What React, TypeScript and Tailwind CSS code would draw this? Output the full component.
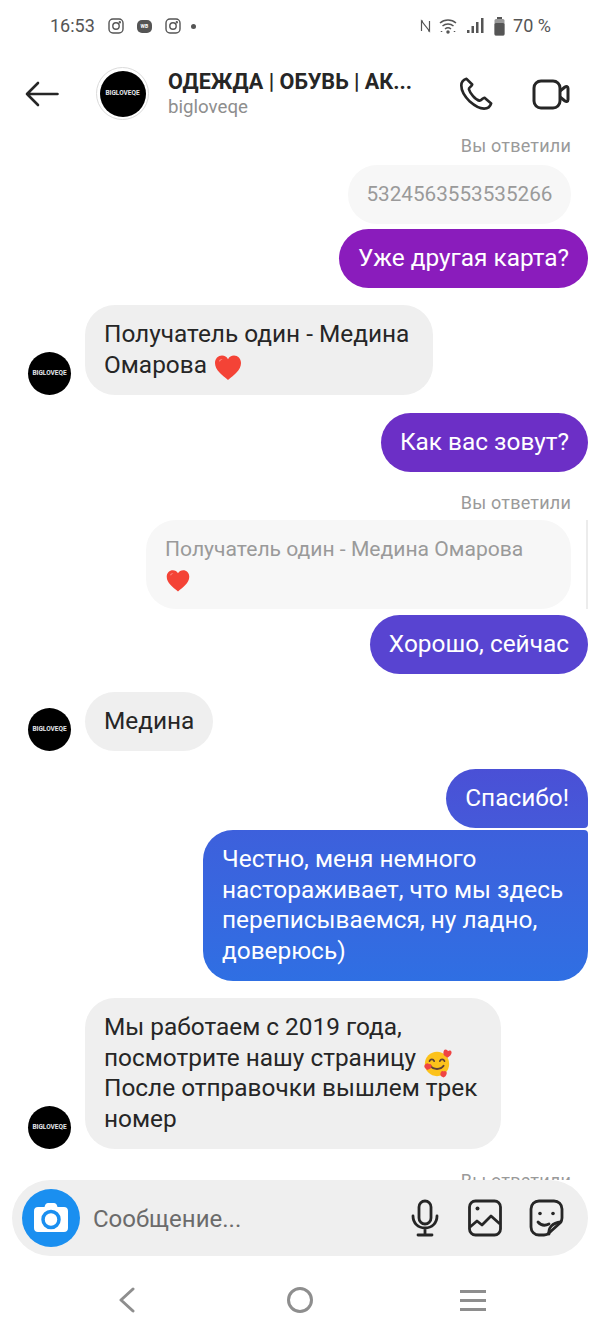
import React from "react";

const Avatar = () => (
  <div className="w-[43px] h-[43px] rounded-full bg-black flex items-center justify-center shrink-0">
    <span className="text-[6.500px] leading-none font-bold text-gray-200 font-['Roboto',sans-serif]">BIGLOVEQE</span>
  </div>
);

const Heart = ({ size = 30 }: { size?: number }) => (
  <svg width={size} height={size} viewBox="0 0 30 30" className="inline-block align-[-6px] -my-[4px]">
    <path
      d="M15 27C9 22 2 17 2 10c0-4.500 3.200-7.500 7-7.500 2.600 0 4.800 1.300 6 3.700 1.200-2.400 3.400-3.700 6-3.700 3.800 0 7 3 7 7.500 0 7-7 12-13 17z"
      fill="#f44336"
    />
    <path d="M6 7.500c1-1.300 2.500-1.800 3.800-1.500-1.500.6-2.500 1.600-3 3z" fill="#ff8a80" />
  </svg>
);

const Smiling = () => (
  <svg width="30" height="30" viewBox="0 0 32 32" className="inline-block align-[-6px] -my-[6px]">
    <circle cx="16" cy="17" r="13" fill="#fcc21b" />
    <path d="M8 14c1-2.500 4-2.500 5 0M19 14c1-2.500 4-2.500 5 0" stroke="#5d4037" strokeWidth="1.800" fill="none" strokeLinecap="round" />
    <path d="M9 19c3 4.500 11 4.500 14 0" stroke="#5d4037" strokeWidth="2" fill="none" strokeLinecap="round" />
    <path d="M25 1.500c1.500 0 2.500 1 2.700 2 .6-1 2-1.300 3-.5 1.500 1.300.8 3.500-.5 5l-3 2.500-3.500-2.500C22 6 23 1.500 25 1.500z" fill="#ef4444" />
    <path d="M4 17c1.300-1 2.700-.7 3.500.3.800-.5 2-.3 2.500.7.800 1.800-.5 3.500-2 4.500l-2.500 1-2.500-2.500C2 19.500 2.500 18 4 17z" fill="#ef4444" />
    <path d="M20 26c.7-1.300 2-1.700 3-1 .8-.8 2-.8 2.800 0 1.200 1.300.5 3.500-.8 5l-2 1.500-2.500-1.500c-1-1-1.200-2.800-.5-4z" fill="#ef4444" />
  </svg>
);

const InstaIcon = () => (
  <svg width="16" height="16" viewBox="0 0 16 16" fill="none" stroke="#555" strokeWidth="1.400">
    <rect x="1" y="1" width="14" height="14" rx="4" />
    <circle cx="8" cy="8" r="3.200" />
    <circle cx="11.800" cy="4.200" r=".5" fill="#555" />
  </svg>
);

const Label = ({ className = "" }: { className?: string }) => (
  <div className={`pr-[29px] text-right text-[18px] leading-[22px] tracking-[0.2px] text-[#9a9a9a] ${className}`}>Вы ответили</div>
);

const Mine = ({ className, children }: { className: string; children: React.ReactNode }) => (
  <div className="flex justify-end pr-3">
    <div className={`px-[19px] py-[14.250px] text-white ${className}`}>{children}</div>
  </div>
);

const Theirs = ({ className = "", children }: { className?: string; children: React.ReactNode }) => (
  <div className={`flex items-end gap-[14px] pl-7 ${className}`}>
    <Avatar />
    <div className="rounded-[30px] bg-[#efefef] px-[19px] py-[14.250px] text-[#262626]">{children}</div>
  </div>
);

export default function App() {
  return (
    <div className="flex h-[1332px] w-[600px] flex-col overflow-hidden bg-white font-['Roboto',sans-serif] text-[24.400px] leading-[30.500px]">
      {/* status bar */}
      <div className="flex h-[52px] shrink-0 items-center justify-between pl-[50px] pr-[49px] text-[18px] text-[#555]">
        <div className="flex items-center gap-[13px]">
          <span>16:53</span>
          <InstaIcon />
          <span className="flex h-[13px] w-[15px] items-center justify-center rounded-[5px] bg-[#555] text-[5px] font-bold leading-none text-white">WB</span>
          <InstaIcon />
          <span className="-ml-[3px] h-[5px] w-[5px] rounded-full bg-[#555]" />
        </div>
        <div className="flex items-center">
          <svg width="11" height="16" viewBox="0 0 11 16" fill="none" stroke="#555" strokeWidth="1.200">
            <path d="M1.500 13V3l8 10V3M1.500 3H3M9.500 13H8" />
          </svg>
          <svg width="18" height="16" viewBox="0 0 18 16" fill="none" stroke="#555" strokeWidth="1.500" className="ml-[8px]">
            <path d="M1 5c4.500-4 11.500-4 16 0M3.500 8c3-2.600 8-2.600 11 0M6 11c1.700-1.300 4.300-1.300 6 0" />
            <circle cx="9" cy="14" r="1" fill="#555" />
            <path d="M2.500 13v2M15.500 13v2" strokeDasharray="1 1" />
          </svg>
          <svg width="17" height="16" viewBox="0 0 17 16" fill="#555" className="ml-[10px]">
            <rect x="0" y="12" width="2.500" height="3" />
            <rect x="4.500" y="8" width="2.500" height="7" />
            <rect x="9" y="4" width="2.500" height="11" />
            <rect x="14" y="0" width="2.500" height="15" />
          </svg>
          <svg width="11" height="19" viewBox="0 0 11 19" fill="#555" className="ml-[10px]">
            <rect x="3" y="0" width="5" height="2" />
            <rect x=".5" y="2" width="10" height="16.500" rx="1.500" fill="#999" />
            <rect x=".5" y="6" width="10" height="12.500" rx="1.500" />
          </svg>
          <span className="ml-[8px]">70 %</span>
        </div>
      </div>

      {/* header */}
      <div className="flex h-[83px] shrink-0 items-center pl-[25px] pr-[30px]">
        <svg width="34" height="26" viewBox="0 0 34 26" fill="none" stroke="#262626" strokeWidth="2.600" strokeLinecap="round" strokeLinejoin="round" className="shrink-0">
          <path d="M32.500 13H2M13 2 2 13l11 11" />
        </svg>
        <div className="ml-[37px] flex h-[53px] w-[53px] shrink-0 items-center justify-center rounded-full border-[1.500px] border-[#dbdbdb]">
          <div className="flex h-[46px] w-[46px] items-center justify-center rounded-full bg-black">
            <span className="text-[6.500px] font-bold leading-none text-gray-200">BIGLOVEQE</span>
          </div>
        </div>
        <div className="ml-[19px] flex-1">
          <div className="text-[21.600px] font-bold leading-[27px] text-[#262626]">ОДЕЖДА | ОБУВЬ | АК...</div>
          <div className="text-[18.700px] leading-[24px] text-[#8e8e8e]">bigloveqe</div>
        </div>
        <svg width="36" height="36" viewBox="0 0 38 38" fill="none" stroke="#262626" strokeWidth="2.800" strokeLinejoin="round" className="mr-[38px] shrink-0">
          <path d="M9 3C6 4 3.500 6.500 3.500 10c0 5 4 12 9 17 4.500 4 10 7.500 15 7.500 3.500 0 6.500-2 7.500-5.500l-7-6c-1.500-.5-3.500 3.500-5.500 3-4-1-10-8-11-12-.5-2 3.500-3 3.500-5z" />
        </svg>
        <svg width="38" height="32" viewBox="0 0 38 32" fill="none" stroke="#262626" strokeWidth="3" strokeLinejoin="round" className="shrink-0">
          <rect x="2" y="3" width="26" height="27" rx="7" />
          <path d="M28 13l5-4c1.500-1 3-.5 3 1.500v11c0 2-1.500 2.500-3 1.500l-5-4" />
        </svg>
      </div>

      {/* messages */}
      <div className="flex min-h-0 flex-1 flex-col overflow-hidden">
        <Label />
        <div className="mt-2 flex justify-end pr-[29px]">
          <div className="rounded-[29px] bg-[#f7f7f7] px-[18.500px] py-[14px] text-[20.700px] text-[#9a9a9a]">5324563553535266</div>
        </div>
        <div className="mt-[5.500px]">
          <Mine className="rounded-[30px] bg-[#8a1cbc]">Уже другая карта?</Mine>
        </div>
        <Theirs className="mt-[17px]">
          <div className="h-[61.500px] w-[310px]">
            Получатель один - Медина Омарова <Heart />
          </div>
        </Theirs>
        <div className="mt-[18px]">
          <Mine className="rounded-[30px] bg-[#6c2fc6]">Как вас зовут?</Mine>
        </div>
        <Label className="mt-[20px]" />
        <div className="mt-[6px] flex justify-end pr-3">
          <div className="flex items-stretch gap-[15px]">
            <div className="w-[425px] rounded-[30px] bg-[#f7f7f7] px-[19px] py-[14px] text-[21.100px] text-[#9a9a9a]">
              Получатель один - Медина Омарова
              <div className="h-[30px] leading-[24px]">
                <Heart size={26} />
              </div>
            </div>
            <div className="w-[2px] bg-[#ececec]" />
          </div>
        </div>
        <div className="mt-[6.500px]">
          <Mine className="rounded-[30px] bg-[#5844d1]">Хорошо, сейчас</Mine>
        </div>
        <Theirs className="mt-[18px]">Медина</Theirs>
        <div className="mt-[18px]">
          <Mine className="rounded-[30px] rounded-br-[4px] bg-linear-to-b from-[#4a50d6] to-[#4559d9]">Спасибо!</Mine>
        </div>
        <div className="mt-[2px]">
          <Mine className="w-[385px] rounded-[30px] rounded-tr-[4px] bg-linear-to-b from-[#3d60dc] to-[#2f6fe3]">
            Честно, меня немного настораживает, что мы здесь переписываемся, ну ладно, доверюсь)
          </Mine>
        </div>
        <Theirs className="mt-[17.500px]">
          <div className="w-[378px]">
            Мы работаем с 2019 года, посмотрите нашу страницу <Smiling /> После отправочки вышлем трек номер
          </div>
        </Theirs>
        <Label className="mt-[21px] shrink-0" />
      </div>

      {/* composer */}
      <div className="shrink-0 px-3">
        <div className="flex h-[76px] items-center rounded-[38px] bg-[#efefef] pl-[10px] pr-[24px]">
          <div className="flex h-[58px] w-[58px] shrink-0 items-center justify-center rounded-full bg-[#1a8ff0]">
            <svg width="36" height="32" viewBox="0 0 36 32">
              <path d="M12 3.500c.5-1.500 1.500-2.500 3-2.500h6c1.500 0 2.500 1 3 2.500l.5 1.500H31c2.500 0 4 1.500 4 4v17c0 2.500-1.500 4-4 4H5c-2.500 0-4-1.500-4-4V9c0-2.500 1.500-4 4-4h6.500z" fill="#fff" />
              <circle cx="18" cy="17.500" r="8" fill="none" stroke="#1a8ff0" strokeWidth="3.500" />
            </svg>
          </div>
          <span className="ml-[13px] flex-1 translate-y-px text-[24px] text-[#6b6b6b]">Сообщение...</span>
          <svg width="28" height="38" viewBox="0 0 28 38" fill="none" stroke="#262626" strokeWidth="2.800" strokeLinecap="round" className="shrink-0">
            <rect x="8" y="2" width="12" height="23" rx="6" />
            <path d="M2 17c0 7 5 12 12 12s12-5 12-12M14 29v7M7 36h14" />
          </svg>
          <svg width="34" height="38" viewBox="0 0 34 38" fill="none" stroke="#262626" strokeWidth="2.800" strokeLinejoin="round" className="ml-[29px] shrink-0">
            <rect x="1.500" y="2" width="31" height="34" rx="6" />
            <circle cx="9.500" cy="9.500" r="2" fill="#262626" stroke="none" />
            <path d="M2 28l7-6 5 4 9-9 9 8" />
          </svg>
          <svg width="35" height="38" viewBox="0 0 35 38" fill="none" stroke="#262626" strokeWidth="2.800" strokeLinejoin="round" strokeLinecap="round" className="ml-[27px] shrink-0">
            <path d="M10 2h15c4.500 0 8 3.500 8 8v9c0 2-.5 3.500-2 5L20 34c-1.500 1.500-3 2-5 2h-5c-4.500 0-8-3.500-8-8V10c0-4.500 3.500-8 8-8z" />
            <path d="M9 23c3 3.500 7 4 11 2M20 35c-1-6 3-11 12-12" />
            <circle cx="11" cy="14.500" r="1.800" fill="#262626" stroke="none" />
            <circle cx="24" cy="14.500" r="1.800" fill="#262626" stroke="none" />
          </svg>
        </div>
      </div>

      {/* nav bar */}
      <div className="flex h-[76px] shrink-0 items-center justify-between pl-[118px] pr-[114px] pt-[12px]">
        <svg width="18" height="26" viewBox="0 0 18 26" fill="none" stroke="#8e8e8e" strokeWidth="3" strokeLinecap="round" strokeLinejoin="round">
          <path d="M15 2 3 13l12 11" />
        </svg>
        <div className="ml-[4px] h-[26px] w-[26px] rounded-full border-[3px] border-[#8e8e8e]" />
        <div className="flex w-[26px] flex-col gap-[6px]">
          <div className="h-[3px] bg-[#8e8e8e]" />
          <div className="h-[3px] bg-[#8e8e8e]" />
          <div className="h-[3px] bg-[#8e8e8e]" />
        </div>
      </div>
    </div>
  );
}
